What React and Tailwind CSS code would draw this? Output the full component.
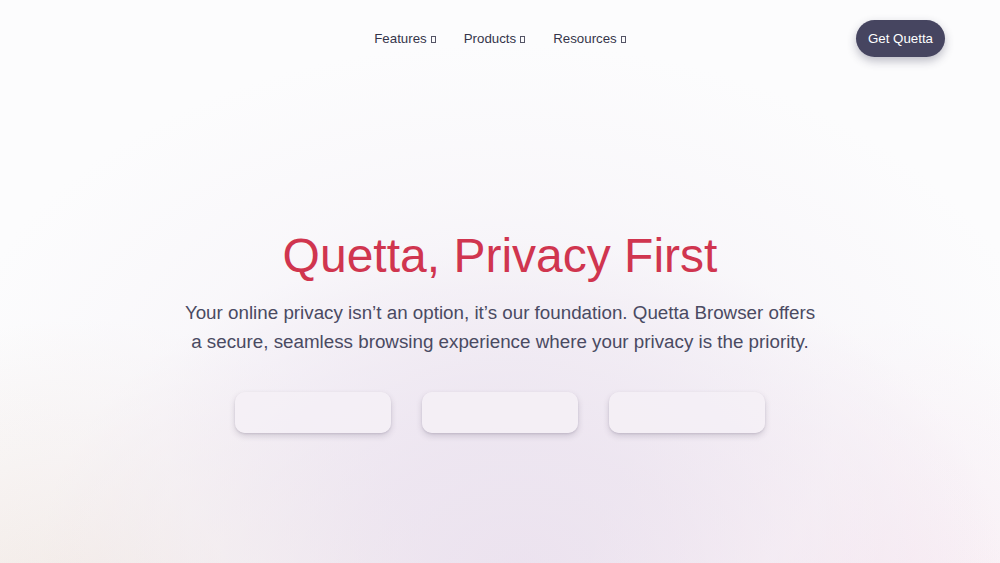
export default function App() {
  const navItems = ["Features", "Products", "Resources"];
  return (
    <div className="relative w-full h-[563px] overflow-hidden bg-[#fcfcfd] font-['Liberation_Sans',Arial,sans-serif]">
      <div className="absolute inset-0 bg-[radial-gradient(ellipse_480px_320px_at_52%_100%,#e2d1e5_0%,rgba(228,212,230,0.85)_35%,rgba(245,238,245,0)_100%)]" />
      <div className="absolute inset-0 bg-[radial-gradient(ellipse_360px_300px_at_8%_110%,rgba(240,230,224,0.9)_0%,rgba(245,238,234,0)_100%)]" />
      <div className="absolute inset-0 bg-[radial-gradient(ellipse_300px_300px_at_88%_110%,rgba(246,228,238,0.8)_0%,rgba(248,238,243,0)_100%)]" />
      <div className="absolute inset-0 bg-[radial-gradient(ellipse_560px_380px_at_50%_75%,rgba(238,232,242,0.8)_0%,rgba(246,243,248,0.5)_60%,rgba(252,252,253,0)_100%)]" />

      <div className="relative flex flex-col">
        <header className="flex items-center pt-[20px] px-[55px] h-[57px]">
          <div className="flex-1" />
          <nav className="flex items-center gap-[28px] text-[13.3px] text-[#35354a]">
            {navItems.map((item) => (
              <div key={item} className="flex items-center gap-[4px]">
                <span>{item}</span>
                <span className="inline-block w-[5px] h-[7px] border border-[#555566] mt-[1px]" />
              </div>
            ))}
          </nav>
          <div className="flex-1 flex justify-end">
            <button className="h-[37px] w-[89px] rounded-full bg-[#464560] text-white text-[13.3px] shadow-[0_4px_10px_rgba(40,40,70,0.3)]">
              Get Quetta
            </button>
          </div>
        </header>

        <main className="flex flex-col items-center pt-[170px]">
          <h1 className="text-[48px] leading-[1.2] text-[#d0354f]">Quetta, Privacy First</h1>
          <p className="mt-[13px] max-w-[640px] text-center text-[18.8px] leading-[29px] text-[#4a4a62]">
            Your online privacy isn’t an option, it’s our foundation. Quetta Browser offers a secure, seamless browsing experience where your privacy is the priority.
          </p>
          <div className="mt-[36px] flex gap-[31px]">
            {[0, 1, 2].map((i) => (
              <div
                key={i}
                className="w-[156px] h-[41px] rounded-[10px] bg-[rgba(244,240,246,0.85)] shadow-[0_3px_6px_rgba(60,50,80,0.18),0_1px_2px_rgba(60,50,80,0.12)]"
              />
            ))}
          </div>
        </main>
      </div>
    </div>
  );
}
